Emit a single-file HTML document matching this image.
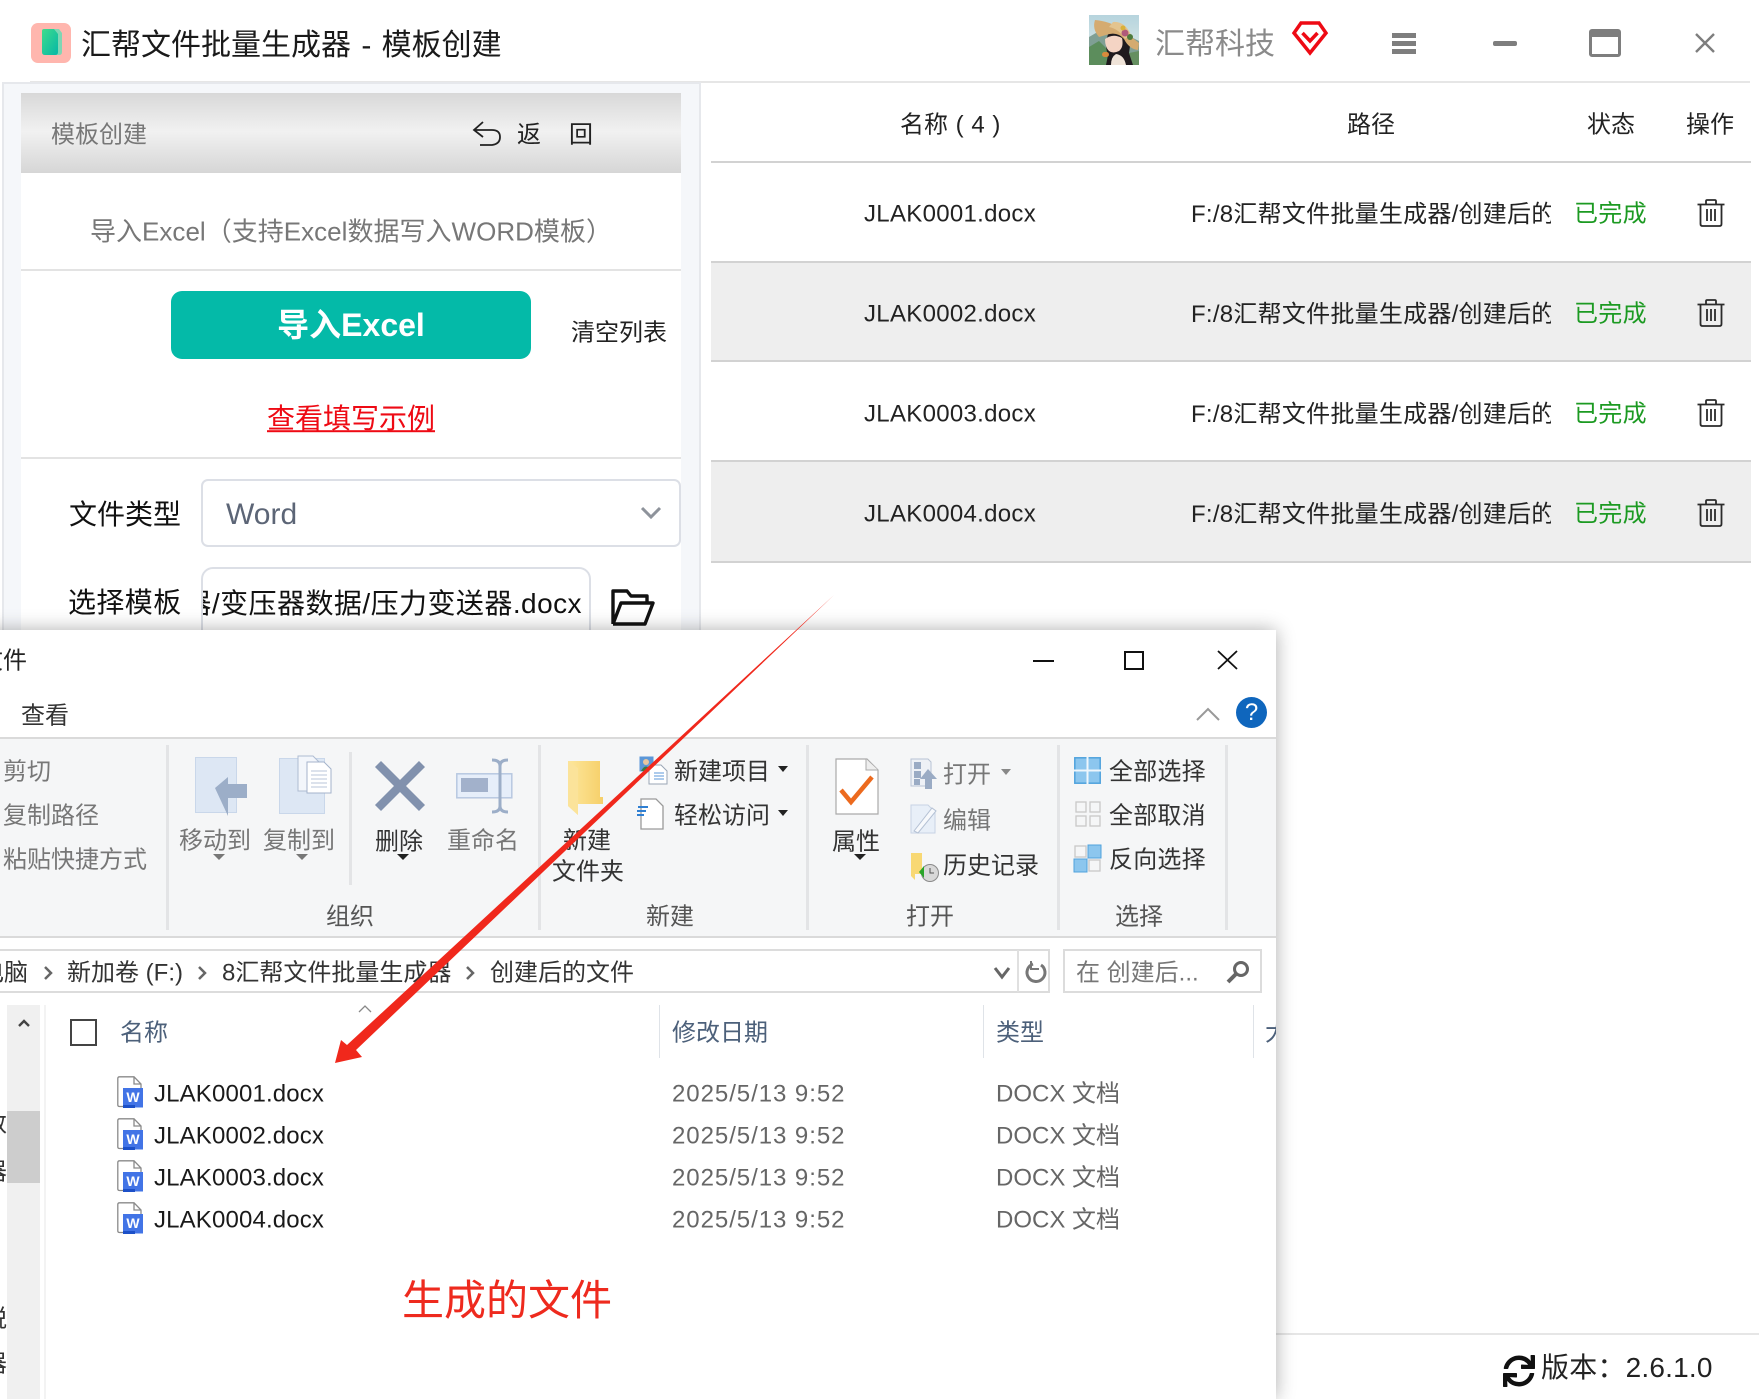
<!DOCTYPE html>
<html lang="zh-CN">
<head>
<meta charset="utf-8">
<title>汇帮文件批量生成器 - 模板创建</title>
<style>
html,body{margin:0;padding:0;background:#fff}
html{width:1759px;height:1399px;overflow:hidden}
body{width:1759px;height:1399px;font-family:"Liberation Sans","Noto Sans CJK SC",sans-serif;color:#222}
#p{position:relative;width:1759px;height:1399px;overflow:hidden}
.a{position:absolute}
.t{position:absolute;white-space:nowrap;transform:translateY(-50%);line-height:1.2}
.f24{font-size:24px}
svg{position:absolute;overflow:visible}
.g{color:#777}
.row{position:absolute;left:711px;right:8px;height:100px;border-bottom:2px solid #d2d2d2;box-sizing:border-box}
.sep{position:absolute;width:3px;background:#e3e4e6}
.tri{position:absolute;width:0;height:0;border-left:6px solid transparent;border-right:6px solid transparent;border-top:6px solid #777}
.tri.k{border-top-color:#222}
.doc{letter-spacing:.3px}
.dt{letter-spacing:.95px;color:#666}
.pth{position:absolute;left:1191px;width:360px;height:32px;line-height:32px;overflow:hidden;white-space:nowrap;font-size:24px;letter-spacing:.25px}
</style>
</head>
<body>
<div id="p">
<svg width="0" height="0" style="position:absolute">
<defs>
<linearGradient id="lg" x1="0" y1="0" x2="1" y2="1"><stop offset="0" stop-color="#3fdc8c"/><stop offset="1" stop-color="#05b7a6"/></linearGradient>
<linearGradient id="fy" x1="0" y1="0" x2="1" y2="0"><stop offset="0" stop-color="#fde79c"/><stop offset="1" stop-color="#f6cf69"/></linearGradient>
<linearGradient id="sky" x1="0" y1="0" x2="0" y2="1"><stop offset="0" stop-color="#b6d4de"/><stop offset="1" stop-color="#e6eee8"/></linearGradient>
<symbol id="trash" viewBox="0 0 30 28">
<path d="M1.500 5.500H28.500M10 5V2.200Q10 1 11.200 1H18.800Q20 1 20 2.200V5M4.500 6V25Q4.500 27 6.500 27H23.500Q25.500 27 25.500 25V6M11 10V22M15 10V22M19 10V22" fill="none" stroke="#2b2b2b" stroke-width="1.800"/>
</symbol>
<symbol id="word" viewBox="0 0 26 32">
<path d="M2.500 .8H17L24 8V13M6 30.500H2.500Q.8 30.500 .8 29V2.500Q.8.8 2.500.8M17 1V8H24" fill="#fff" stroke="#8a8a8a" stroke-width="1.300"/>
<rect x="6" y="12" width="20" height="19.500" fill="#4274e6"/>
<rect x="6" y="29" width="12" height="3" fill="#1c50c8"/>
<text x="16" y="26" font-family="Liberation Sans,sans-serif" font-size="14" font-weight="700" text-anchor="middle" fill="#fff">W</text>
</symbol>
</defs>
</svg>

<!-- title bar -->
<svg style="left:31px;top:23px" width="40" height="40" viewBox="0 0 40 40">
<rect width="40" height="40" rx="7" fill="#ffb6ae"/>
<path d="M18 6H28L31 10V29Q31 32 28 32H22Z" fill="#7fd6b4"/>
<path d="M13 6H23L27 11V29Q27 32 24 32H14Q11 32 11 29V8Q11 6 13 6Z" fill="url(#lg)"/>
</svg>
<div class="t" style="left:81px;top:46px;font-size:30px;color:#1a1a1a;word-spacing:2px">汇帮文件批量生成器 - 模板创建</div>

<svg style="left:1089px;top:15px" width="50" height="50" viewBox="0 0 50 50">
<rect width="50" height="50" fill="url(#sky)"/>
<path d="M0 22L12 15L22 22L34 18L50 26V50H0Z" fill="#7f9f94"/>
<path d="M0 32L10 26L22 38L22 50H0Z" fill="#5c8d5c"/>
<path d="M40 38L50 36V50H38Z" fill="#658f60"/>
<path d="M20 16Q15 30 19 40L17 50H44L40 38L42 24L36 14Z" fill="#1f1a1e"/>
<path d="M22 50Q22 42 27 39Q35 40 37 50Z" fill="#efe3d8"/>
<path d="M16 24Q24 18 33 23Q35 32 30 36Q24 39 20 36Q16 32 16 24Z" fill="#f4d4c4"/>
<path d="M6 5Q20 6 32 14L50 28L49 35Q40 34 35 24Q28 16 17 20L10 22Q3 14 6 5Z" fill="#d5ab70"/>
<path d="M24 7Q36 6 42 20L36 24Q30 14 20 12Z" fill="#e3c48e"/>
<circle cx="36" cy="18" r="3.500" fill="#b0597a"/><circle cx="41" cy="22" r="3" fill="#4d7a3c"/><circle cx="34" cy="13" r="2.500" fill="#d9b13a"/>
<rect x="13" y="37" width="7" height="5" rx="2.500" fill="#d88a3c"/>
</svg>
<div class="t" style="left:1155px;top:45px;font-size:30px;color:#8a8a8a">汇帮科技</div>
<svg style="left:1292px;top:21px" width="36" height="34" viewBox="0 0 36 34">
<path d="M9 2H27L34 12L18 32L2 12Z" fill="none" stroke="#ee0a14" stroke-width="3.500" stroke-linejoin="miter"/>
<path d="M10.500 12L18 20L25.500 12" fill="none" stroke="#ee0a14" stroke-width="3.500"/>
</svg>
<div class="a" style="left:1392px;top:33px;width:24px;height:5px;background:#7e7e7e"></div>
<div class="a" style="left:1392px;top:41px;width:24px;height:5px;background:#7e7e7e"></div>
<div class="a" style="left:1392px;top:49px;width:24px;height:5px;background:#7e7e7e"></div>
<div class="a" style="left:1493px;top:41px;width:24px;height:5px;border-radius:2px;background:#7e7e7e"></div>
<div class="a" style="left:1589px;top:29px;width:32px;height:28px;box-sizing:border-box;border:3px solid #7e7e7e;border-top-width:8px;border-radius:3px"></div>
<svg style="left:1695px;top:33px" width="20" height="20" viewBox="0 0 20 20"><path d="M1 1L19 19M19 1L1 19" stroke="#7e7e7e" stroke-width="2.400" fill="none"/></svg>
<div class="a" style="left:30px;right:9px;top:81px;height:2px;background:#e6e6e6"></div>

<!-- left panel -->
<div class="a" style="left:2px;top:82px;width:699px;height:600px;box-sizing:border-box;background:#f5f7fa;border:2px solid #e6e8ec"></div>
<div class="a" style="left:21px;top:93px;width:660px;height:560px;background:#fff"></div>
<div class="a" style="left:21px;top:93px;width:660px;height:80px;background:linear-gradient(#d8d8d8,#f1f1f1 48%,#d6d6d6)"></div>
<div class="t" style="left:51px;top:136px;font-size:24px;color:#777">模板创建</div>
<svg style="left:472px;top:120px" width="30" height="28" viewBox="0 0 30 28"><path d="M11 2L2 10L11 17M2 10H20Q28 10 28 17T20 25H8" fill="none" stroke="#222" stroke-width="1.800"/></svg>
<div class="t" style="left:517px;top:136px;font-size:24px;color:#222">返</div>
<div class="t" style="left:569px;top:136px;font-size:24px;color:#222">回</div>
<div class="t" style="left:90px;top:232px;font-size:26px;color:#777;letter-spacing:.02px">导入Excel（支持Excel数据写入WORD模板）</div>
<div class="a" style="left:21px;top:269px;width:660px;height:2px;background:#e3e3e3"></div>
<div class="a" style="left:171px;top:291px;width:360px;height:68px;border-radius:11px;background:#04baa8"></div>
<div class="t" style="left:171px;width:360px;text-align:center;top:325px;font-size:32px;font-weight:700;color:#fff">导入Excel</div>
<div class="t" style="left:571px;top:334px;font-size:24px;color:#222">清空列表</div>
<div class="t" style="left:267px;top:419px;font-size:28px;color:#ee0a14;text-decoration:underline">查看填写示例</div>
<div class="a" style="left:21px;top:457px;width:660px;height:2px;background:#e3e3e3"></div>
<div class="t" style="left:69px;top:515px;font-size:28px;color:#111">文件类型</div>
<div class="a" style="left:201px;top:479px;width:480px;height:68px;box-sizing:border-box;border:2px solid #dcdfe6;border-radius:7px"></div>
<div class="t" style="left:226px;top:515px;font-size:30px;color:#5c6576">Word</div>
<svg style="left:640px;top:505px" width="22" height="16" viewBox="0 0 22 16"><path d="M2 3L11 12L20 3" fill="none" stroke="#8e939b" stroke-width="3"/></svg>
<div class="t" style="left:68px;top:603px;font-size:28px;color:#111;letter-spacing:.4px">选择模板</div>
<div class="a" style="left:201px;top:567px;width:390px;height:90px;box-sizing:border-box;border:2px solid #dcdfe6;border-radius:12px;overflow:hidden">
 <div class="t" style="right:7px;top:35px;font-size:28px;color:#111;letter-spacing:.45px">/8汇帮文件批量生成器/变压器数据/压力变送器.docx</div>
</div>
<svg style="left:611px;top:588px" width="44" height="38" viewBox="0 0 44 38"><path d="M2 36V3H16L20 8H36V15M2 36H34L42 15H10L2 36" fill="none" stroke="#111" stroke-width="3.400" stroke-linejoin="round"/></svg>

<!-- table -->
<div class="t" style="left:900px;top:126px;font-size:24px;word-spacing:1px">名称 ( 4 )</div>
<div class="t" style="left:1347px;top:126px;font-size:24px">路径</div>
<div class="t" style="left:1587px;top:126px;font-size:24px">状态</div>
<div class="t" style="left:1686px;top:126px;font-size:24px">操作</div>
<div class="a" style="left:711px;right:8px;top:161px;height:2px;background:#d2d2d2"></div>

<div class="row" style="top:163px"></div>
<div class="row" style="top:263px;height:99px;background:#eee"></div>
<div class="row" style="top:362px;"></div>
<div class="row" style="top:462px;height:101px;background:#eee"></div>

<div class="t doc f24" style="left:864px;top:215px">JLAK0001.docx</div>
<div class="t doc f24" style="left:864px;top:315px">JLAK0002.docx</div>
<div class="t doc f24" style="left:864px;top:415px">JLAK0003.docx</div>
<div class="t doc f24" style="left:864px;top:515px">JLAK0004.docx</div>
<div class="pth" style="top:199px">F:/8汇帮文件批量生成器/创建后的文件</div>
<div class="pth" style="top:299px">F:/8汇帮文件批量生成器/创建后的文件</div>
<div class="pth" style="top:399px">F:/8汇帮文件批量生成器/创建后的文件</div>
<div class="pth" style="top:499px">F:/8汇帮文件批量生成器/创建后的文件</div>
<div class="t f24" style="left:1574px;top:215px;color:#1c9a22;letter-spacing:.3px">已完成</div>
<div class="t f24" style="left:1574px;top:315px;color:#1c9a22;letter-spacing:.3px">已完成</div>
<div class="t f24" style="left:1574px;top:415px;color:#1c9a22;letter-spacing:.3px">已完成</div>
<div class="t f24" style="left:1574px;top:515px;color:#1c9a22;letter-spacing:.3px">已完成</div>
<svg style="left:1696px;top:199px" width="30" height="28"><use href="#trash"/></svg>
<svg style="left:1696px;top:299px" width="30" height="28"><use href="#trash"/></svg>
<svg style="left:1696px;top:399px" width="30" height="28"><use href="#trash"/></svg>
<svg style="left:1696px;top:499px" width="30" height="28"><use href="#trash"/></svg>

<!-- bottom right -->
<div class="a" style="left:1276px;right:0;top:1333px;height:2px;background:#e6e6e6"></div>
<svg style="left:1503px;top:1355px" width="32" height="32" viewBox="0 0 512 512"><path fill="#111" d="M440.65 12.57l4 82.77A247.16 247.16 0 0 0 255.83 8C134.73 8 33.91 94.92 12.29 209.82A12 12 0 0 0 24.09 224h49.05a12 12 0 0 0 11.67-9.26 175.91 175.91 0 0 1 317-56.94l-101.46-4.86a12 12 0 0 0-12.57 12v47.41a12 12 0 0 0 12 12H500a12 12 0 0 0 12-12V12a12 12 0 0 0-12-12h-47.37a12 12 0 0 0-11.98 12.57zM255.83 432a175.61 175.61 0 0 1-146-77.8l101.8 4.87a12 12 0 0 0 12.57-12v-47.4a12 12 0 0 0-12-12H12a12 12 0 0 0-12 12V500a12 12 0 0 0 12 12h47.35a12 12 0 0 0 12-12.6l-4.15-82.57A247.17 247.17 0 0 0 255.83 504c121.11 0 221.93-86.92 243.55-201.82a12 12 0 0 0-11.8-14.18h-49.05a12 12 0 0 0-11.67 9.26A175.86 175.86 0 0 1 255.83 432z"/></svg>
<div class="t" style="left:1541px;top:1368px;font-size:28px;color:#222;letter-spacing:.2px">版本：2.6.1.0</div>

<!-- explorer window -->
<div class="a" style="left:-30px;top:630px;width:1306px;height:769px;background:#fff;box-shadow:0 0 18px rgba(0,0,0,.32)"></div>
<div class="t f24" style="left:-21px;top:662px;color:#222">文件</div>
<div class="a" style="left:1033px;top:660px;width:21px;height:2px;background:#111"></div>
<div class="a" style="left:1124px;top:651px;width:20px;height:19px;box-sizing:border-box;border:2px solid #111"></div>
<svg style="left:1217px;top:650px" width="21" height="20" viewBox="0 0 21 20"><path d="M1 1L20 19M20 1L1 19" stroke="#111" stroke-width="1.800" fill="none"/></svg>
<div class="t f24" style="left:21px;top:717px;color:#333">查看</div>
<svg style="left:1196px;top:707px" width="24" height="14" viewBox="0 0 24 14"><path d="M1 13L12 2L23 13" fill="none" stroke="#999" stroke-width="2"/></svg>
<div class="a" style="left:1236px;top:697px;width:31px;height:31px;border-radius:50%;background:#0f66bd;color:#fff;font-size:24px;line-height:31px;text-align:center">?</div>

<!-- ribbon -->
<div class="a" style="left:0;top:737px;width:1276px;height:201px;box-sizing:border-box;background:#f5f6f7;border-top:2px solid #dadada;border-bottom:2px solid #dadada"></div>
<div class="sep" style="left:166px;top:745px;height:185px"></div>
<div class="sep" style="left:349px;top:752px;height:133px"></div>
<div class="sep" style="left:538px;top:745px;height:185px"></div>
<div class="sep" style="left:806px;top:745px;height:185px"></div>
<div class="sep" style="left:1057px;top:745px;height:185px"></div>
<div class="sep" style="left:1225px;top:745px;height:185px"></div>

<div class="t f24 g" style="left:3px;top:773px">剪切</div>
<div class="t f24 g" style="left:3px;top:817px">复制路径</div>
<div class="t f24 g" style="left:3px;top:861px">粘贴快捷方式</div>

<svg style="left:195px;top:757px" width="54" height="60" viewBox="0 0 54 60">
<rect x=".5" y=".5" width="41" height="55" fill="#dde7f4" stroke="#c9d7ea"/>
<path d="M20 31L33 20V27H52V41H33V59Z" fill="#9caec8"/></svg>
<svg style="left:279px;top:755px" width="54" height="60" viewBox="0 0 54 60">
<rect x=".5" y="3.500" width="45" height="55" fill="#dde7f4" stroke="#c9d7ea"/>
<path d="M19 1H34L40 7V36H19Z" fill="#f3f6fb" stroke="#aebcd2"/>
<path d="M28 7H45L52 14V38H28Z" fill="#fff" stroke="#a4b3cb"/>
<path d="M32 16H48M32 20H48M32 24H48M32 28H48M32 32H48" stroke="#b8c5d8"/></svg>
<svg style="left:375px;top:761px" width="50" height="50" viewBox="0 0 50 50"><path d="M3 3L47 47M47 3L3 47" stroke="#8191ad" stroke-width="8.500" fill="none"/></svg>
<svg style="left:456px;top:758px" width="58" height="56" viewBox="0 0 58 56">
<rect x=".8" y="15.800" width="55" height="24" fill="#e6eefa" stroke="#b8c8e0" stroke-width="1.500"/>
<rect x="5" y="20" width="27" height="14" fill="#a2b1cb"/>
<path d="M36 2Q44 2 44 8V48Q44 54 36 54M52 2Q44 2 44 8V48Q44 54 52 54" fill="none" stroke="#9caec8" stroke-width="3"/></svg>

<div class="t f24 g" style="left:179px;top:842px">移动到</div>
<div class="t f24 g" style="left:263px;top:842px">复制到</div>
<div class="t f24" style="left:375px;top:843px;color:#333">删除</div>
<div class="t f24 g" style="left:447px;top:842px">重命名</div>
<div class="tri" style="left:213px;top:854px"></div>
<div class="tri" style="left:296px;top:854px"></div>
<div class="tri k" style="left:397px;top:854px"></div>

<svg style="left:567px;top:760px" width="38" height="56" viewBox="0 0 38 56">
<path d="M1 1H33V37H36V44L10 44L11 55L1 46Z" fill="url(#fy)"/>
<path d="M1 1L11 8V55L1 46Z" fill="#fbe39a"/></svg>
<div class="t f24" style="left:563px;top:842px;color:#333">新建</div>
<div class="t f24" style="left:552px;top:873px;color:#333">文件夹</div>

<svg style="left:639px;top:756px" width="30" height="30" viewBox="0 0 30 30">
<rect x=".5" y=".5" width="14" height="15" fill="#5b97d8"/><circle cx="7" cy="6" r="3" fill="#e7c6a0"/><path d="M2 15Q7 6 12 15" fill="#3a7a44"/>
<path d="M10 9H22L28 15V28H10Z" fill="#fff" stroke="#9aa6b6"/><path d="M15 17H25M15 20H25M15 23H25" stroke="#5b97d8"/></svg>
<svg style="left:637px;top:798px" width="28" height="32" viewBox="0 0 28 32">
<path d="M4 1H19L26 8V31H4Z" fill="#fff" stroke="#9a9a9a" stroke-width="1.300"/><path d="M1 9H11M0 13H9M0 17H7" stroke="#2f7fd2" stroke-width="2"/></svg>
<div class="t f24" style="left:674px;top:773px;color:#333">新建项目</div>
<div class="t f24" style="left:674px;top:817px;color:#333">轻松访问</div>
<div class="tri k" style="left:778px;top:766px;border-left-width:5px;border-right-width:5px"></div>
<div class="tri k" style="left:778px;top:810px;border-left-width:5px;border-right-width:5px"></div>
<div class="t f24" style="left:646px;top:918px;color:#555">新建</div>

<svg style="left:835px;top:758px" width="44" height="57" viewBox="0 0 44 57">
<path d="M1 1H32L43 12V56H1Z" fill="#fff" stroke="#aaa" stroke-width="1.200"/>
<path d="M31 1V12H43" fill="#eee" stroke="#aaa"/>
<path d="M6 32L16 44L37 19" fill="none" stroke="#ec6a1e" stroke-width="4.500"/></svg>
<div class="t f24" style="left:832px;top:843px;color:#333">属性</div>
<div class="tri k" style="left:854px;top:854px"></div>

<svg style="left:910px;top:758px" width="28" height="32" viewBox="0 0 28 32">
<path d="M1 1H18L21 4V28H1Z" fill="#eef1f6" stroke="#b8c3d4"/>
<rect x="4" y="4" width="7" height="7" fill="#9aabc4"/><rect x="4" y="13" width="7" height="7" fill="#9aabc4"/><rect x="4" y="21" width="6" height="6" fill="#9aabc4"/>
<path d="M18 11L27 21H22V31H15V21H10Z" fill="#9aabc4"/></svg>
<svg style="left:910px;top:804px" width="28" height="30" viewBox="0 0 28 30">
<path d="M1 1H18L25 8V29H1Z" fill="#e8eff8" stroke="#c7d3e4"/>
<path d="M4 27L22 4L26 7L8 29Z" fill="#f7f9fc" stroke="#b4c1d4"/></svg>
<svg style="left:910px;top:852px" width="30" height="30" viewBox="0 0 30 30">
<path d="M1 1H12V22H5V28L1 24Z" fill="#f8d873"/><circle cx="20" cy="21" r="8.500" fill="#d8d8d8" stroke="#8a8a8a"/>
<path d="M20 16V21H24" stroke="#555" fill="none"/><path d="M9 20L14 14V26Z" fill="#2aa52a"/></svg>
<div class="t f24 g" style="left:943px;top:776px">打开</div>
<div class="tri" style="left:1001px;top:769px;border-left-width:5px;border-right-width:5px;border-top-color:#888"></div>
<div class="t f24 g" style="left:943px;top:822px">编辑</div>
<div class="t f24" style="left:943px;top:867px;color:#333">历史记录</div>
<div class="t f24" style="left:906px;top:918px;color:#555">打开</div>

<svg style="left:1074px;top:757px" width="27" height="27" viewBox="0 0 27 27"><rect x=".8" y=".8" width="25.400" height="25.400" fill="#8cc6ee" stroke="#4fa2dc" stroke-width="1.500"/><path d="M13.500 0V27M0 13.500H27" stroke="#eef6fc" stroke-width="2"/></svg>
<svg style="left:1075px;top:801px" width="26" height="26" viewBox="0 0 26 26"><g fill="none" stroke="#c8c8c8" stroke-width="1.300"><rect x="1" y="1" width="10" height="10"/><rect x="15" y="1" width="10" height="10"/><rect x="1" y="15" width="10" height="10"/><rect x="15" y="15" width="10" height="10"/></g></svg>
<svg style="left:1074px;top:845px" width="27" height="27" viewBox="0 0 27 27"><rect x="1" y="1" width="11" height="11" fill="none" stroke="#c8c8c8" stroke-width="1.300"/><rect x="14" y="0" width="13" height="13" fill="#8cc6ee" stroke="#4fa2dc"/><rect x="0" y="14" width="13" height="13" fill="#8cc6ee" stroke="#4fa2dc"/><rect x="15" y="15" width="11" height="11" fill="none" stroke="#c8c8c8" stroke-width="1.300"/></svg>
<div class="t f24" style="left:1109px;top:773px;color:#333;letter-spacing:.2px">全部选择</div>
<div class="t f24" style="left:1109px;top:817px;color:#333;letter-spacing:.2px">全部取消</div>
<div class="t f24" style="left:1109px;top:861px;color:#333;letter-spacing:.2px">反向选择</div>
<div class="t f24" style="left:1115px;top:918px;color:#555">选择</div>
<div class="t f24" style="left:326px;top:918px;color:#555">组织</div>

<!-- address bar -->
<div class="a" style="left:-4px;top:949px;width:1054px;height:44px;box-sizing:border-box;border:2px solid #dcdcdc"></div>
<div class="a" style="left:1017px;top:950px;width:2px;height:42px;background:#e0e0e0"></div>
<div class="a" style="left:1063px;top:949px;width:199px;height:44px;box-sizing:border-box;border:2px solid #dcdcdc"></div>
<div class="t f24" style="left:-20px;top:974px;color:#333">电脑</div>
<svg style="left:43px;top:965px" width="10" height="16" viewBox="0 0 10 16"><path d="M2 2L8 8L2 14" fill="none" stroke="#666" stroke-width="2.500"/></svg>
<div class="t f24" style="left:67px;top:974px;color:#333">新加卷 (F:)</div>
<svg style="left:197px;top:965px" width="10" height="16" viewBox="0 0 10 16"><path d="M2 2L8 8L2 14" fill="none" stroke="#666" stroke-width="2.500"/></svg>
<div class="t f24" style="left:222px;top:974px;color:#333">8汇帮文件批量生成器</div>
<svg style="left:465px;top:965px" width="10" height="16" viewBox="0 0 10 16"><path d="M2 2L8 8L2 14" fill="none" stroke="#666" stroke-width="2.500"/></svg>
<div class="t f24" style="left:490px;top:974px;color:#333">创建后的文件</div>
<svg style="left:993px;top:966px" width="18" height="14" viewBox="0 0 18 14"><path d="M2 2L9 11L16 2" fill="none" stroke="#666" stroke-width="3"/></svg>
<svg style="left:1026px;top:960px" width="21" height="24" viewBox="0 0 21 24"><path d="M7 4A9 9 0 1 0 15 5" fill="none" stroke="#777" stroke-width="3"/><path d="M5 1V9H13" fill="none" stroke="#777" stroke-width="2"/></svg>
<div class="t f24" style="left:1076px;top:974px;color:#777">在 创建后...</div>
<svg style="left:1226px;top:960px" width="24" height="24" viewBox="0 0 24 24"><circle cx="15" cy="9" r="6.500" fill="none" stroke="#666" stroke-width="3"/><path d="M10 14L2 22" stroke="#666" stroke-width="4"/></svg>

<!-- list -->
<div class="a" style="left:7px;top:1005px;width:33px;height:394px;background:#f0f0f0"></div>
<div class="a" style="left:7px;top:1111px;width:33px;height:72px;background:#cdcdcd"></div>
<svg style="left:17px;top:1018px" width="14" height="10" viewBox="0 0 14 10"><path d="M2 8L7 3L12 8" fill="none" stroke="#444" stroke-width="2.400"/></svg>
<div class="a" style="left:44px;top:1005px;width:2px;height:394px;background:#f3f3f3"></div>
<div class="a" style="left:0;top:1105px;width:7px;height:90px;overflow:hidden"><div class="t f24" style="left:-17px;top:20px;color:#333">数</div><div class="t f24" style="left:-17px;top:68px;color:#333">器</div></div>
<div class="a" style="left:0;top:1300px;width:7px;height:90px;overflow:hidden"><div class="t f24" style="left:-17px;top:20px;color:#333">税</div><div class="t f24" style="left:-17px;top:65px;color:#333">器</div></div>

<div class="a" style="left:70px;top:1019px;width:27px;height:27px;box-sizing:border-box;border:2px solid #444"></div>
<div class="t f24" style="left:120px;top:1034px;color:#4c607a">名称</div>
<svg style="left:358px;top:1004px" width="14" height="9" viewBox="0 0 14 9"><path d="M1 8L7 2L13 8" fill="none" stroke="#888" stroke-width="1.300"/></svg>
<div class="a" style="left:659px;top:1005px;width:1px;height:53px;background:#dfe3e8"></div>
<div class="a" style="left:983px;top:1005px;width:1px;height:53px;background:#dfe3e8"></div>
<div class="a" style="left:1253px;top:1005px;width:1px;height:53px;background:#dfe3e8"></div>
<div class="t f24" style="left:672px;top:1034px;color:#4c607a">修改日期</div>
<div class="t f24" style="left:996px;top:1034px;color:#4c607a">类型</div>
<div class="a" style="left:1265px;top:1017px;width:11px;height:34px;overflow:hidden"><div class="t f24" style="left:0;top:17px;color:#4c607a">大小</div></div>

<svg style="left:117px;top:1076px" width="26" height="32"><use href="#word"/></svg>
<svg style="left:117px;top:1118px" width="26" height="32"><use href="#word"/></svg>
<svg style="left:117px;top:1160px" width="26" height="32"><use href="#word"/></svg>
<svg style="left:117px;top:1202px" width="26" height="32"><use href="#word"/></svg>
<div class="t f24 doc" style="left:154px;top:1095px;color:#1a1a1a;letter-spacing:.15px">JLAK0001.docx</div>
<div class="t f24 doc" style="left:154px;top:1137px;color:#1a1a1a;letter-spacing:.15px">JLAK0002.docx</div>
<div class="t f24 doc" style="left:154px;top:1179px;color:#1a1a1a;letter-spacing:.15px">JLAK0003.docx</div>
<div class="t f24 doc" style="left:154px;top:1221px;color:#1a1a1a;letter-spacing:.15px">JLAK0004.docx</div>
<div class="t f24 dt" style="left:672px;top:1095px">2025/5/13 9:52</div>
<div class="t f24 dt" style="left:672px;top:1137px">2025/5/13 9:52</div>
<div class="t f24 dt" style="left:672px;top:1179px">2025/5/13 9:52</div>
<div class="t f24 dt" style="left:672px;top:1221px">2025/5/13 9:52</div>
<div class="t f24" style="left:996px;top:1095px;color:#666">DOCX 文档</div>
<div class="t f24" style="left:996px;top:1137px;color:#666">DOCX 文档</div>
<div class="t f24" style="left:996px;top:1179px;color:#666">DOCX 文档</div>
<div class="t f24" style="left:996px;top:1221px;color:#666">DOCX 文档</div>

<div class="t" style="left:402px;top:1301px;font-size:42px;color:#ee2a1e">生成的文件</div>

<!-- red arrow annotation -->
<svg style="left:0;top:0" width="1759" height="1399" viewBox="0 0 1759 1399">
<path d="M834 595L356 1050L362 1057L335 1063L341 1040L347 1045Z" fill="#f0281c"/>
</svg>
</div>
</body>
</html>
